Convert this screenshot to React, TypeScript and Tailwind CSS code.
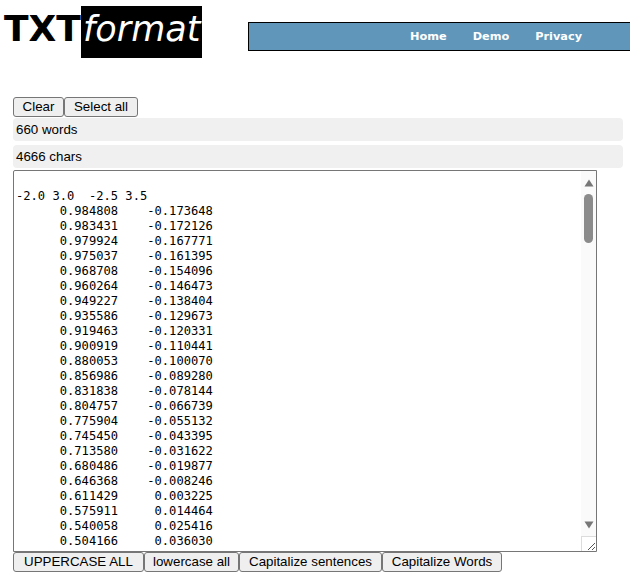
const sans = "font-['Liberation_Sans',Arial,sans-serif]";
const btn =
  "h-[20px] whitespace-nowrap rounded-[3px] border border-[#767676] bg-[#efefef] text-[13.33px] leading-[18px] text-black";

const rows = [
  ["0.984808", "-0.173648"],
  ["0.983431", "-0.172126"],
  ["0.979924", "-0.167771"],
  ["0.975037", "-0.161395"],
  ["0.968708", "-0.154096"],
  ["0.960264", "-0.146473"],
  ["0.949227", "-0.138404"],
  ["0.935586", "-0.129673"],
  ["0.919463", "-0.120331"],
  ["0.900919", "-0.110441"],
  ["0.880053", "-0.100070"],
  ["0.856986", "-0.089280"],
  ["0.831838", "-0.078144"],
  ["0.804757", "-0.066739"],
  ["0.775904", "-0.055132"],
  ["0.745450", "-0.043395"],
  ["0.713580", "-0.031622"],
  ["0.680486", "-0.019877"],
  ["0.646368", "-0.008246"],
  ["0.611429", " 0.003225"],
  ["0.575911", " 0.014464"],
  ["0.540058", " 0.025416"],
  ["0.504166", " 0.036030"],
];

const text =
  "\n-2.0 3.0  -2.5 3.5\n" +
  rows.map((r) => `      ${r[0]}    ${r[1]}`).join("\n");

function Logo() {
  return (
    <div className="flex h-[58px] items-start font-['DejaVu_Sans',sans-serif] text-[36px] leading-[52px]">
      <span className="mt-[3px] ml-[4px] w-[77px] font-bold text-black">TXT</span>
      <span className="mt-[6px] h-[52px] w-[121px] overflow-hidden whitespace-nowrap bg-black pl-[2px] text-[35px] italic leading-[46px] text-white">
        format
      </span>
    </div>
  );
}

function Nav() {
  return (
    <nav className="mt-[22px] ml-[46px] flex h-[29px] flex-1 items-center gap-[26px] border-y border-l border-black bg-[#6096ba] pt-[1px] pl-[161px] font-['DejaVu_Sans',sans-serif] text-[11.3px] font-bold text-white">
      <span>Home</span>
      <span>Demo</span>
      <span>Privacy</span>
    </nav>
  );
}

function Scrollbar() {
  return (
    <div className="flex w-[15px] flex-col items-center bg-[#fafafa]">
      <svg width="10" height="8" viewBox="0 0 10 8" className="mt-[8px] shrink-0">
        <path d="M5 0.5 L9.5 7.5 L0.5 7.5 Z" fill="#777" />
      </svg>
      <div className="mt-[7px] h-[49px] w-[9px] rounded-[5px] bg-[#8b8b8b]" />
      <svg width="10" height="8" viewBox="0 0 10 8" className="mt-[278px] shrink-0">
        <path d="M5 7.5 L9.5 0.5 L0.5 0.5 Z" fill="#777" />
      </svg>
      <div className="mt-auto flex h-[15px] w-[15px] items-end justify-end border-t border-l border-[#dcdcdc] bg-white">
        <svg width="12" height="12" viewBox="0 0 12 12">
          <path d="M11 4 L4 11 M11 8 L8 11" stroke="#555" strokeWidth="1" fill="none" />
        </svg>
      </div>
    </div>
  );
}

export default function App() {
  return (
    <div className={`h-[574px] w-[630px] overflow-hidden bg-white ${sans}`}>
      <header className="flex h-[58px] items-start">
        <Logo />
        <Nav />
      </header>

      <div className="mt-[39px] ml-[13px] flex">
        <button type="button" className={`${btn} w-[51px]`}>Clear</button>
        <button type="button" className={`${btn} w-[74px]`}>Select all</button>
      </div>

      <div className="mt-[1px] ml-[13px] w-[610px]">
        <div className="flex h-[23px] items-center rounded-[4px] bg-[#f0f0f0] pl-[3px] text-[13.33px] text-black">
          660 words
        </div>
        <div className="mt-[4px] flex h-[23px] items-center rounded-[4px] bg-[#f0f0f0] pl-[3px] text-[13.33px] text-black">
          4666 chars
        </div>
      </div>

      <div className="mt-[2px] ml-[13px] flex h-[382px] w-[584px] overflow-hidden rounded-tl-[2px] border border-[#767676]">
        <pre className="flex-1 overflow-hidden pt-[3px] pl-[2px] font-['DejaVu_Sans_Mono',monospace] text-[12.12px] leading-[15px] text-black">
          {text}
        </pre>
        <Scrollbar />
      </div>

      <div className="ml-[13px] flex">
        <button type="button" className={`${btn} w-[131px]`}>UPPERCASE ALL</button>
        <button type="button" className={`${btn} w-[95px]`}>lowercase all</button>
        <button type="button" className={`${btn} w-[143px]`}>Capitalize sentences</button>
        <button type="button" className={`${btn} w-[120px]`}>Capitalize Words</button>
      </div>
    </div>
  );
}
